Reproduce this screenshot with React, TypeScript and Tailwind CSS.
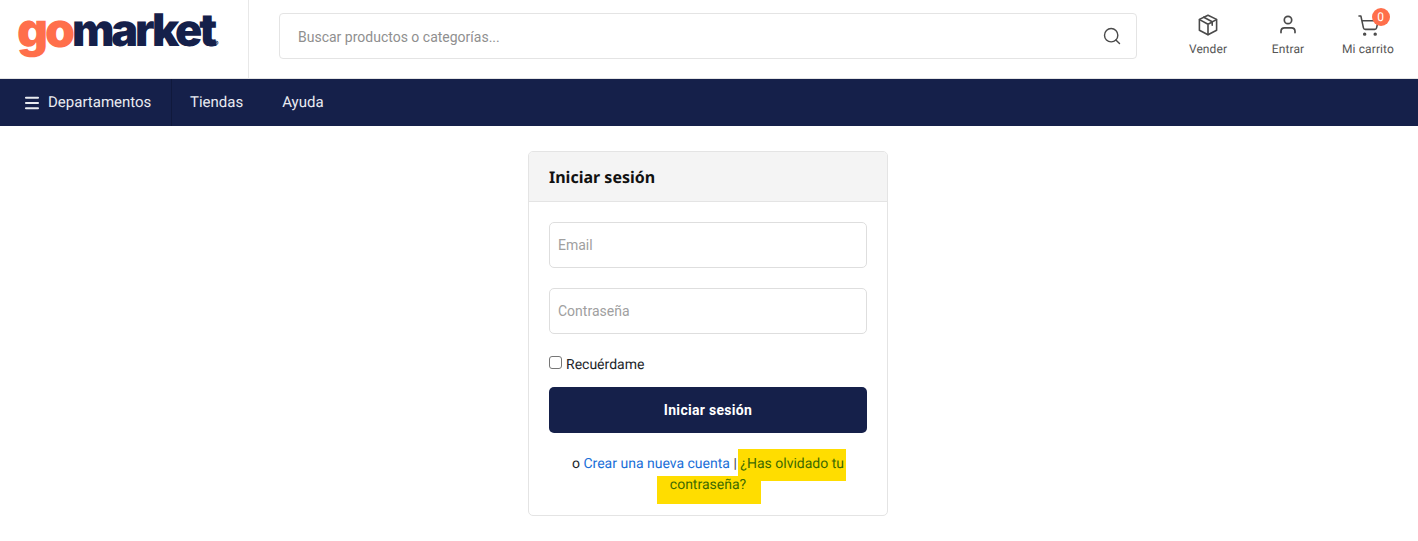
import { Menu, Search, ShoppingCart } from "lucide-react";

function BoxIcon() {
  return (
    <svg width="20" height="22" viewBox="0 0 20 22" fill="none" stroke="#4a4a4a" strokeWidth="1.6" strokeLinejoin="round" strokeLinecap="round">
      <path d="M10 1.200 18.600 5.400v10.800L10 20.800 1.400 16.200V5.400Z" />
      <path d="M1.600 5.600 10 10.200l8.400-4.600M10 10.200v10.400M5.800 3.200l8.400 4.600v3.400" />
    </svg>
  );
}

function UserIcon() {
  return (
    <svg width="18" height="20" viewBox="0 0 18 20" fill="none" stroke="#4a4a4a" strokeWidth="1.7" strokeLinecap="round">
      <circle cx="9" cy="5" r="3.700" />
      <path d="M2 17.600v-1.400c0-2 1.600-3.400 3.600-3.400h6.800c2 0 3.600 1.400 3.600 3.400v1.400" />
    </svg>
  );
}

function HeaderAction({ label, icon, badge }: { label: string; icon: React.ReactNode; badge?: boolean }) {
  return (
    <div className="w-[80px] flex flex-col items-center">
      <div className="relative h-[24px] flex items-center justify-center">
        {icon}
        {badge && (
          <span className="absolute left-[15px] top-[-5px] w-[18px] h-[18px] rounded-full bg-[#ff6f4b] text-white text-[12px] leading-[18px] text-center">0</span>
        )}
      </div>
      <span className="mt-[3px] text-[12px] tracking-[0.1px] leading-[18px] text-[#555555]">{label}</span>
    </div>
  );
}

export default function App() {
  return (
    <div className="min-h-[541px] bg-white font-['Roboto',sans-serif] text-[#212529] antialiased [text-rendering:geometricPrecision]">
      <header className="h-[79px] flex border-b border-[#e4e4e4]">
        <div className="w-[249px] shrink-0 border-r border-[#e8e8e8] pl-[17px] pt-[1px] flex items-start">
          <div className="font-['Inter',sans-serif] font-black leading-[58px] whitespace-nowrap flex">
            <span className="text-[#ff6f4b] text-[48px] tracking-[-3px]">go</span>
            <span className="text-[#15204a] text-[45px] tracking-[-3.2px]">market</span>
            <span className="text-[7px] leading-[7px] mt-[39px] text-[#15204a]">®</span>
          </div>
        </div>
        <div className="flex-1 flex items-start pl-[30px] pt-[13px]">
          <div className="flex-1 h-[46px] border border-[#e4e4e4] rounded-[4px] flex items-center pl-[18px] pr-[14px]">
            <input
              className="flex-1 outline-none text-[14px] pt-[2px] placeholder:text-[#8f8f8f]"
              placeholder="Buscar productos o categorías..."
            />
            <Search size={20} strokeWidth={1.7} color="#4a4a4a" />
          </div>
        </div>
        <div className="w-[281px] shrink-0 flex items-start pt-[13px] pl-[31px]">
          <div className="flex">
            <HeaderAction label="Vender" icon={<BoxIcon />} />
            <HeaderAction label="Entrar" icon={<UserIcon />} />
            <HeaderAction label="Mi carrito" icon={<ShoppingCart size={23} strokeWidth={1.6} color="#4a4a4a" />} badge />
          </div>
        </div>
      </header>

      <nav className="h-[47px] bg-[#15204a] flex items-stretch text-[15px] text-[#e9ebf1]">
        <div className="w-[172px] border-r border-[#10193c] flex items-center pl-[23px] gap-[7px]">
          <Menu size={18} strokeWidth={2.8} />
          <span>Departamentos</span>
        </div>
        <div className="flex items-center pl-[18px] gap-[39px]">
          <span>Tiendas</span>
          <span>Ayuda</span>
        </div>
      </nav>

      <main className="flex justify-center pt-[25px] pr-[2px]">
        <div className="w-[360px] h-[365px] border border-[#e4e4e4] rounded-[5px] overflow-hidden">
          <div className="h-[50px] bg-[#f4f4f4] border-b border-[#e4e4e4] flex items-center pl-[20px] font-['Noto_Sans',sans-serif] font-bold text-[16px] text-[#111111]">
            Iniciar sesión
          </div>
          <div className="px-[20px] pt-[20px]">
            <input
              className="block w-full h-[46px] border border-[#dedede] rounded-[5px] px-[8px] outline-none text-[14px] placeholder:text-[#a0a0a0]"
              placeholder="Email"
            />
            <input
              className="block w-full h-[46px] mt-[20px] border border-[#dedede] rounded-[5px] px-[8px] outline-none text-[14px] placeholder:text-[#a0a0a0]"
              placeholder="Contraseña"
            />
            <label className="flex items-start mt-[21px] h-[22px] text-[14px] leading-[20px] text-[#212529]">
              <input type="checkbox" className="w-[13px] h-[13px] m-0 mt-[1px] mr-[4px] appearance-none bg-white border border-[#767676] rounded-[3px]" />
              <span>Recuérdame</span>
            </label>
            <button className="block w-full h-[46px] mt-[10px] bg-[#15204a] rounded-[5px] text-white font-bold text-[14px] tracking-[0.3px]">
              Iniciar sesión
            </button>
            <p className="mt-[21px] text-center text-[14px] leading-[21px]">
              o <a className="text-[#1a6fd8]">Crear una nueva cuenta</a> <span className="text-[#444444]">|</span>{" "}
              <span className="bg-[#ffdd00] text-[#3d6a00] pt-[7px] pb-[9px] px-[2px] mx-[-2px]">¿Has olvidado tu</span>
              <br />
              <span className="bg-[#ffdd00] text-[#3d6a00] pt-[1px] pb-[11px] pl-[13px] pr-[15px] ml-[-13px] mr-[-15px]">contraseña?</span>
            </p>
          </div>
        </div>
      </main>
    </div>
  );
}
